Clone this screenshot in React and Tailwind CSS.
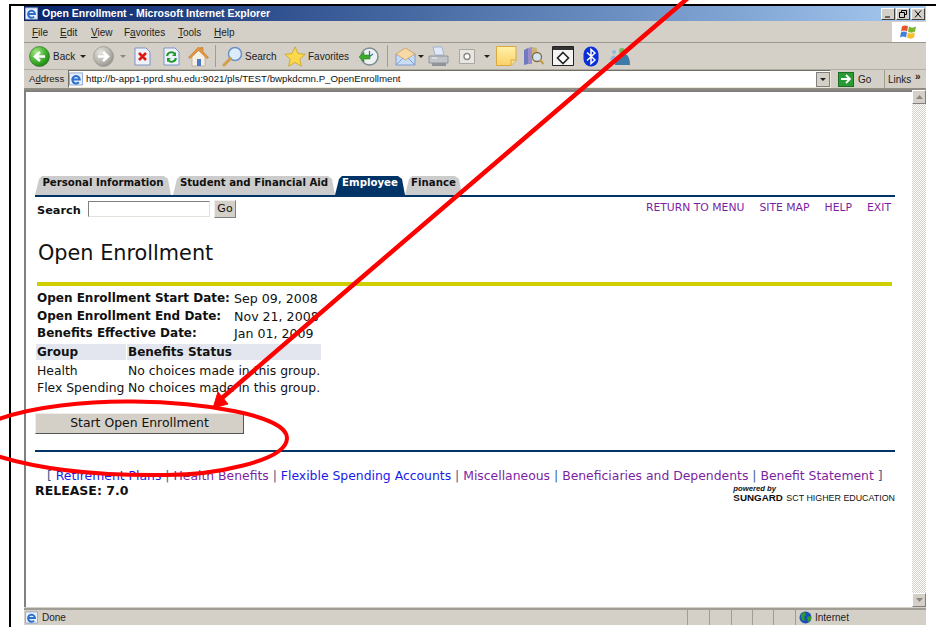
import React from 'react';

const chrome = "font-['Liberation_Sans','Noto_Sans',sans-serif]";

const DropArrow = ({ className = '', color = '#222' }) => (
    <svg width="6" height="3" viewBox="0 0 6 3" className={className}>
        <path d="M0 0h6L3 3z" fill={color} />
    </svg>
);

const RoundArrow = ({ flip, disabled }) => {
    const id = disabled ? 'forwardBall' : 'backBall';
    return (
        <svg width="21" height="21" viewBox="0 0 21 21">
            <defs>
                <radialGradient id={id} cx="35%" cy="30%" r="80%">
                    <stop offset="0" stopColor={disabled ? '#e6e4de' : '#a6e88a'} />
                    <stop offset="0.6" stopColor={disabled ? '#b5b3ac' : '#3fae2a'} />
                    <stop offset="1" stopColor={disabled ? '#8f8d86' : '#1a7a12'} />
                </radialGradient>
            </defs>
            <circle cx="10.5" cy="10.5" r="10" fill={`url(#${id})`} stroke={disabled ? '#8f8d86' : '#1d6d14'} strokeWidth="0.6" />
            <path
                d={flip ? 'M5 10.5h9M10 6l5 4.5-5 4.5' : 'M16 10.5H7M11 6l-5 4.5 5 4.5'}
                fill="none"
                stroke="#fff"
                strokeWidth="2.6"
            />
        </svg>
    );
};

const StopIcon = () => (
    <svg width="17" height="19" viewBox="0 0 17 19">
        <path d="M1 1h11l4 4v13H1z" fill="#eef2fb" stroke="#7f93c8" />
        <path d="M5 6l7 7M12 6l-7 7" stroke="#e01a10" strokeWidth="2.6" />
    </svg>
);

const RefreshIcon = () => (
    <svg width="17" height="19" viewBox="0 0 17 19">
        <path d="M1 1h11l4 4v13H1z" fill="#eef2fb" stroke="#7f93c8" />
        <path d="M4 9a4.5 4.5 0 0 1 8-2" fill="none" stroke="#1f9a2a" strokeWidth="2" />
        <path d="M13 5v4H9z" fill="#1f9a2a" />
        <path d="M13 11a4.5 4.5 0 0 1-8 2" fill="none" stroke="#1f9a2a" strokeWidth="2" />
        <path d="M4 15v-4h4z" fill="#1f9a2a" />
    </svg>
);

const HomeIcon = () => (
    <svg width="21" height="21" viewBox="0 0 21 21">
        <path d="M4 10v10h13V10l-6-6z" fill="#f4f0e6" stroke="#a89a80" strokeWidth="0.6" />
        <path d="M0.5 11.5L10.5 1l2 2V1.5h2.5v4l5.5 6-1.5 1-8.5-8-8.5 8z" fill="#e8963a" stroke="#b56a20" strokeWidth="0.5" />
        <path d="M9 13h4v7H9z" fill="#4a7ac8" />
    </svg>
);

const SearchIcon = () => (
    <svg width="21" height="21" viewBox="0 0 21 21">
        <circle cx="13" cy="8" r="6.5" fill="#dcecfb" stroke="#6b93c4" strokeWidth="1.5" />
        <path d="M8.5 12.5L2 19" stroke="#d29c4a" strokeWidth="3" strokeLinecap="round" />
    </svg>
);

const StarIcon = () => (
    <svg width="22" height="21" viewBox="0 0 22 21">
        <path d="M11 0.8l3 6.8 7.2.7-5.4 4.8 1.6 7.1L11 16.4l-6.4 3.8 1.6-7.1L.8 8.3 8 7.6z" fill="#fbd94a" stroke="#c9a227" strokeWidth="0.8" />
    </svg>
);

const HistoryIcon = () => (
    <svg width="21" height="21" viewBox="0 0 21 21">
        <circle cx="11.5" cy="10.5" r="8.5" fill="#eef1f2" stroke="#7c8c94" strokeWidth="1.5" />
        <path d="M11.5 5v5.5L15 8" fill="none" stroke="#3a6ea8" strokeWidth="1.2" />
        <path d="M1 11l5-5v3h6v4H6v3z" fill="#3cab2c" stroke="#1e7a16" strokeWidth="0.5" />
    </svg>
);

const MailIcon = () => (
    <svg width="21" height="19" viewBox="0 0 21 19">
        <path d="M1 7h19v11H1z" fill="#c9dcf6" stroke="#7f9ccb" />
        <path d="M1 7l9.5-6L20 7l-9.5 6z" fill="#f6d9a4" stroke="#c4925a" strokeWidth="0.7" />
        <path d="M1 18l7-7M20 18l-7-7" stroke="#7f9ccb" />
    </svg>
);

const PrinterIcon = () => (
    <svg width="21" height="21" viewBox="0 0 21 21">
        <path d="M5 1h9l2 8H7z" fill="#dfe9f7" stroke="#8ea4c2" strokeWidth="0.7" />
        <path d="M1 10h19v7H1z" fill="#c2c6cb" stroke="#7d8288" strokeWidth="0.7" />
        <path d="M4 17h14v3H4z" fill="#8f949a" />
        <path d="M4 12h5" stroke="#f2f2f2" />
    </svg>
);

const EditIcon = () => (
    <svg width="16" height="15" viewBox="0 0 16 15">
        <path d="M.5.5h15v14H.5z" fill="#e8e6e0" stroke="#a9a7a0" />
        <circle cx="8" cy="7.5" r="3" fill="#fff" stroke="#8a8a86" strokeWidth="1.4" />
    </svg>
);

const NoteIcon = () => (
    <svg width="21" height="20" viewBox="0 0 21 20">
        <defs>
            <linearGradient id="noteFill" x1="0" y1="0" x2="0" y2="1">
                <stop offset="0" stopColor="#fff2a8" />
                <stop offset="1" stopColor="#fbd068" />
            </linearGradient>
        </defs>
        <path d="M.5.5h19.5v14l-5 5H.5z" fill="url(#noteFill)" stroke="#d9a93f" />
        <path d="M15 19v-5h5" fill="#f6e39a" stroke="#d9a93f" />
    </svg>
);

const BooksIcon = () => (
    <svg width="21" height="21" viewBox="0 0 21 21">
        <path d="M1 4l4-2v16l-4 1z" fill="#6f7ac0" />
        <path d="M5 2l4-1v17H5z" fill="#9a8fc8" />
        <path d="M9 1l5 1v10H9z" fill="#c9b27a" />
        <circle cx="14" cy="11" r="4.5" fill="#cfe6f7" stroke="#8a6a3a" strokeWidth="1.3" />
        <path d="M17 14l3.5 4" stroke="#c29a4a" strokeWidth="2.2" />
    </svg>
);

const WindowIcon = () => (
    <svg width="22" height="20" viewBox="0 0 22 20">
        <path d="M.5.5h21v19H.5z" fill="#f4f4f2" stroke="#222" />
        <path d="M1 1h20v3H1z" fill="#333" />
        <path d="M11 6.5l5.5 5.5-5.5 5.5L5.500 12z" fill="#fff" stroke="#222" strokeWidth="1.6" />
    </svg>
);

const BluetoothIcon = () => (
    <svg width="16" height="21" viewBox="0 0 16 21">
        <rect x="0.5" y="0.5" width="15" height="20" rx="7.500" fill="#0a2fd8" />
        <path d="M4 6.500l8 7.500-4 3.500V3.500l4 3.500-8 7.500" fill="none" stroke="#fff" strokeWidth="1.500" />
    </svg>
);

const MessengerIcon = () => (
    <svg width="22" height="19" viewBox="0 0 22 19">
        <circle cx="5" cy="5" r="2" fill="#8fb8e0" />
        <path d="M1 13c1-6 6-6 7 0z" fill="#8fb8e0" />
        <circle cx="13" cy="4" r="3" fill="#6fbf5a" />
        <path d="M6 18c0-9 6-11 9-11s6 3 6 11z" fill="#3e79a8" />
    </svg>
);

const IeIcon = ({ size = 15 }) => (
    <svg width={size} height={size} viewBox="0 0 15 15">
        <path d="M.5 1h14v13H.5z" fill="#e8eefb" stroke="#8ea4c8" />
        <path d="M4 8h7.500A4 4 0 1 0 10.500 11" fill="none" stroke="#2a6fc9" strokeWidth="2.200" />
    </svg>
);

const GlobeIcon = () => (
    <svg width="13" height="13" viewBox="0 0 13 13">
        <circle cx="6.500" cy="6.500" r="6" fill="#1d4fb8" />
        <path d="M2 3l4-2 1 3-2 2 1 3-2 1-2-3zM8 6l4-1 0 4-3 2z" fill="#2c9a2c" />
    </svg>
);

const WinFlag = () => (
    <svg width="18" height="16" viewBox="0 0 18 16">
        <path d="M2 2.500c2-1.500 4-1.500 6 0l-1 5c-2-1.500-4-1.500-6 0z" fill="#e8552c" />
        <path d="M9 2.500c2 1.500 4 1.500 7 0l-1 5c-2.500 1.500-5 1.500-7 0z" fill="#7ab52e" />
        <path d="M1 8.500c2-1.500 4-1.500 6 0l-1 5c-2-1.500-4-1.500-6 0z" fill="#3f7fd8" />
        <path d="M8 8.500c2 1.500 4.500 1.500 7 0l-1 5c-2.500 1.500-5 1.500-7 0z" fill="#f6be2c" />
    </svg>
);

const CaptionButton = ({ d }) => (
    <div className="w-[14px] h-[12px] bg-[#d4d0c8] border border-t-white border-l-white border-r-[#404040] border-b-[#404040] flex items-center justify-center">
        <svg width="10" height="8" viewBox="0 0 10 8">
            <path d={d} fill="none" stroke="#000" />
        </svg>
    </div>
);

const TitleBar = () => (
    <div className="h-[15px] flex items-center bg-gradient-to-r from-[#0a246a] to-[#a6caf0] pl-[1px] pr-[1px]">
        <IeIcon size={13} />
        <span className={`${chrome} ml-[4px] text-white font-bold text-[10.500px] leading-none`}>Open Enrollment - Microsoft Internet Explorer</span>
        <div className="ml-auto flex gap-[1px]">
            <CaptionButton d="M2 7h5" />
            <CaptionButton d="M3.500 2.500V.5h5v4h-2M1.500 2.500h5v5h-5z" />
            <CaptionButton d="M2 .5l6 7M8 .5l-6 7" />
        </div>
    </div>
);

const MenuBar = () => (
    <div className="h-[22px] pt-[1px] flex items-stretch border-b border-[#9a978f]">
        <div className={`${chrome} flex items-center pl-[8px] text-[10px] text-[#222]`}>
            <span className="w-[28px]"><u>F</u>ile</span>
            <span className="w-[31px]"><u>E</u>dit</span>
            <span className="w-[33px]"><u>V</u>iew</span>
            <span className="w-[54px]">F<u>a</u>vorites</span>
            <span className="w-[36px]"><u>T</u>ools</span>
            <span><u>H</u>elp</span>
        </div>
        <div className="ml-auto w-[34px] bg-white flex items-center justify-center">
            <WinFlag />
        </div>
    </div>
);

const ToolSeparator = ({ className }) => <div className={`w-[1px] h-[22px] bg-[#a09d95] ${className}`} />;

const ToolBar = () => (
    <div className={`${chrome} h-[27px] flex items-center pl-[5px] text-[10px] text-[#222] border-b border-[#b0ada5]`}>
        <RoundArrow />
        <span className="ml-[3px] w-[20px]">Back</span>
        <DropArrow className="ml-[7px]" />
        <div className="ml-[7px]"><RoundArrow flip disabled /></div>
        <DropArrow className="ml-[6px]" color="#8a8880" />
        <div className="ml-[8px]"><StopIcon /></div>
        <div className="ml-[12px]"><RefreshIcon /></div>
        <div className="ml-[8px]"><HomeIcon /></div>
        <ToolSeparator className="ml-[6px]" />
        <div className="ml-[6px]"><SearchIcon /></div>
        <span className="ml-[2px] w-[30px]">Search</span>
        <div className="ml-[9px]"><StarIcon /></div>
        <span className="ml-[2px] w-[40px]">Favorites</span>
        <div className="ml-[10px]"><HistoryIcon /></div>
        <ToolSeparator className="ml-[8px]" />
        <div className="ml-[7px]"><MailIcon /></div>
        <DropArrow className="ml-[2px]" />
        <div className="ml-[4px]"><PrinterIcon /></div>
        <div className="ml-[10px]"><EditIcon /></div>
        <DropArrow className="ml-[9px]" />
        <div className="ml-[6px]"><NoteIcon /></div>
        <div className="ml-[6px]"><BooksIcon /></div>
        <div className="ml-[8px]"><WindowIcon /></div>
        <div className="ml-[9px]"><BluetoothIcon /></div>
        <div className="ml-[10px]"><MessengerIcon /></div>
    </div>
);

const AddressBar = () => (
    <div className={`${chrome} h-[20px] flex items-center text-[10px] text-[#222] border-b-2 border-[#8f8c84]`}>
        <span className="ml-[5px] w-[39px] text-[9.600px]">A<u>d</u>dress</span>
        <div className="w-[763px] h-[18px] bg-white border border-t-[#716f64] border-l-[#716f64] border-r-[#ece9d8] border-b-[#ece9d8] flex items-center">
            <IeIcon size={14} />
            <span className="ml-[3px] text-[9.700px] leading-none text-[#111]">http://b-app1-pprd.shu.edu:9021/pls/TEST/bwpkdcmn.P_OpenEnrollment</span>
            <div className="ml-auto w-[14px] h-[15px] bg-[#d4d0c8] border border-[#808080] flex items-center justify-center">
                <DropArrow />
            </div>
        </div>
        <div className="ml-[7px] w-[16px] h-[15px] bg-[#2a9a34] flex items-center justify-center border border-[#1c6e24]">
            <svg width="12" height="10" viewBox="0 0 12 10">
                <path d="M1 5h9M6 1l4 4-4 4" fill="none" stroke="#fff" strokeWidth="1.800" />
            </svg>
        </div>
        <span className="ml-[4px] w-[26px]">Go</span>
        <div className="w-[1px] h-[18px] bg-[#a09d95]" />
        <span className="ml-[3px] w-[27px]">Links</span>
        <span className="mb-[4px] font-bold leading-none">»</span>
    </div>
);

const tabShape = "[clip-path:polygon(0_100%,4px_3px,7px_0,calc(100%-7px)_0,calc(100%-3px)_3px,100%_100%)]";

const Tab = ({ label, active, className }) => (
    <div className={`h-[19px] ${tabShape} ${active ? 'bg-[#003366] text-white' : 'bg-[#cccccc] text-[#111]'} font-bold text-[10.200px] leading-[13px] flex justify-center whitespace-nowrap ${className}`}>
        {label}
    </div>
);

const NavLink = ({ children }) => <span className="text-[#7b1fa2]">{children}</span>;

const PageBody = () => (
    <div className="flex-1 bg-white font-['DejaVu_Sans',sans-serif] text-[#111] pt-[83px] pl-[9px] pr-[17px] border-l-2 border-t-2 border-l-[#808080] border-t-[#808080] min-w-0">
        <div className="flex items-end h-[20px]">
            <Tab label="Personal Information" className="w-[136px] mr-[2px]" />
            <Tab label="Student and Financial Aid" className="w-[162px]" />
            <Tab label="Employee" active className="w-[70px]" />
            <Tab label="Finance" className="w-[57px]" />
        </div>
        <div className="h-[2px] bg-[#003366]" />
        <div className="flex items-start pl-[2px] pt-[4px] h-[19px]">
            <span className="w-[51px] font-bold text-[11.300px] leading-[19px]">Search</span>
            <div className="w-[122px] h-[16px] bg-white border border-t-[#808080] border-l-[#808080] border-r-[#e4e2dc] border-b-[#e4e2dc]" />
            <div className="ml-[4px] w-[22px] h-[18px] -mt-[1px] bg-[#d4d0c8] border border-t-[#eeeeee] border-l-[#eeeeee] border-r-[#808080] border-b-[#808080] text-[11px] leading-[15px] text-center">Go</div>
            <div className="ml-auto flex gap-[15px] text-[10.800px] leading-[14px] pr-[4px]">
                <NavLink>RETURN TO MENU</NavLink>
                <NavLink>SITE MAP</NavLink>
                <NavLink>HELP</NavLink>
                <NavLink>EXIT</NavLink>
            </div>
        </div>
        <h1 className="mt-[22px] ml-[3px] text-[20.800px] leading-[30px] font-normal">Open Enrollment</h1>
        <div className="mt-[14px] ml-[2px] mr-[3px] h-[4px] bg-[#cfcf00]" />
        <div className="mt-[4px] ml-[2px] grid grid-cols-[197px_auto] text-[12.600px] leading-[17.500px] justify-start whitespace-nowrap">
            <b className="text-[12px]">Open Enrollment Start Date:</b><span>Sep 09, 2008</span>
            <b className="text-[12px]">Open Enrollment End Date:</b><span>Nov 21, 2008</span>
            <b className="text-[12px]">Benefits Effective Date:</b><span>Jan 01, 2009</span>
        </div>
        <div className="ml-[1px] mt-[1px] grid grid-cols-[90px_194px] gap-x-[1px] text-[12.400px] leading-[17.500px] justify-start whitespace-nowrap">
            <b className="bg-[#e3e6ef] pl-[1px] h-[16px] leading-[17px] text-[12px]">Group</b>
            <b className="bg-[#e3e6ef] pl-[1px] h-[16px] leading-[17px] text-[12px]">Benefits Status</b>
            <span className="pl-[1px] mt-[2px]">Health</span>
            <span className="pl-[1px] mt-[2px]">No choices made in this group.</span>
            <span className="pl-[1px]">Flex Spending</span>
            <span className="pl-[1px]">No choices made in this group.</span>
        </div>
        <div className="mt-[16px] w-[209px] h-[21px] bg-[#d4d0c8] border border-t-[#eeeeee] border-l-[#eeeeee] border-r-[#555555] border-b-[#555555] text-[12.400px] leading-[18px] text-center">Start Open Enrollment</div>
        <div className="mt-[16px] h-[2px] bg-[#003366]" />
        <div className="mt-[15px] ml-[12px] text-[12.400px] leading-[17px] whitespace-nowrap text-[#3a5a8c]">
            [ <span className="text-[#1a1ae6]">Retirement Plans</span> | <span className="text-[#7b1fa2]">Health Benefits</span> | <span className="text-[#1a1ae6]">Flexible Spending Accounts</span> | <span className="text-[#7b1fa2]">Miscellaneous</span> | <span className="text-[#7b1fa2]">Beneficiaries and Dependents</span> | <span className="text-[#7b1fa2]">Benefit Statement</span> ]
        </div>
        <div className="flex justify-between items-start">
            <b className="text-[12.500px] leading-[14px]">RELEASE: 7.0</b>
            <div className="flex flex-col mt-[1px] font-['Liberation_Sans',sans-serif]">
                <i className="text-[7.700px] leading-[7px] font-bold">powered by</i>
                <span className="mt-[1px] text-[8.900px] leading-[10px] whitespace-nowrap"><b className="font-black text-[9.800px] mr-[1px]">SUNGARD</b> SCT HIGHER EDUCATION</span>
            </div>
        </div>
    </div>
);

const ScrollButton = ({ up }) => (
    <div className="h-[14px] bg-[#d4d0c8] border border-t-white border-l-white border-r-[#808080] border-b-[#808080] flex items-center justify-center">
        <svg width="7" height="4" viewBox="0 0 7 4">
            <path d={up ? 'M0 4h7L3.500 0z' : 'M0 0h7L3.500 4z'} fill="#8a8880" />
        </svg>
    </div>
);

const ScrollBar = () => (
    <div className="w-[14px] flex flex-col justify-between bg-[repeating-conic-gradient(#d4d0c8_0_25%,#ffffff_0_50%)] bg-[length:2px_2px]">
        <ScrollButton up />
        <ScrollButton />
    </div>
);

const StatusBar = () => (
    <div className={`${chrome} h-[17px] mt-[1px] flex items-center text-[10px] text-[#222] border-t-2 border-[#a09d95]`}>
        <div className="ml-[1px]"><IeIcon size={13} /></div>
        <span className="ml-[4px]">Done</span>
        <div className="ml-auto flex h-full">
            <div className="w-[22px] border-l border-[#a09d95]" />
            <div className="w-[22px] border-l border-[#a09d95]" />
            <div className="w-[21px] border-l border-[#a09d95]" />
            <div className="w-[21px] border-l border-[#a09d95]" />
            <div className="w-[22px] border-l border-[#a09d95]" />
            <div className="w-[131px] border-l border-[#a09d95] flex items-center pl-[3px]">
                <GlobeIcon />
                <span className="ml-[3px]">Internet</span>
            </div>
        </div>
    </div>
);

// red markup drawn over the window: the pointer line and the ring round the button
const Markup = () => (
    <svg width="936" height="627" viewBox="0 0 936 627" className="absolute left-0 top-0 pointer-events-none">
        <path d="M688 -2L353 285L222 398" fill="none" stroke="#ff0000" strokeWidth="4.500" />
        <path d="M213 408L218 392L228 404z" fill="#ff0000" stroke="#ff0000" strokeWidth="1" />
        <path
            d="M-6 421C30 406 90 401 133 401.500C200 402 287 415 287 438C287 462 210 475 167 475C100 476 40 470 -6 455"
            fill="none"
            stroke="#ff0000"
            strokeWidth="4"
        />
    </svg>
);

export default function App() {
    return (
        <div className="relative w-[936px] h-[627px] bg-white overflow-hidden pt-[4px] pl-[9px]">
            <div className="h-full border-l-[2px] border-t-[2px] border-black pl-[13px] pr-[10px]">
                <div className="h-[619px] flex flex-col bg-[#d4d0c8]">
                    <TitleBar />
                    <MenuBar />
                    <ToolBar />
                    <AddressBar />
                    <div className="flex-1 flex min-h-0">
                        <PageBody />
                        <ScrollBar />
                    </div>
                    <StatusBar />
                </div>
            </div>
            <Markup />
        </div>
    );
}
